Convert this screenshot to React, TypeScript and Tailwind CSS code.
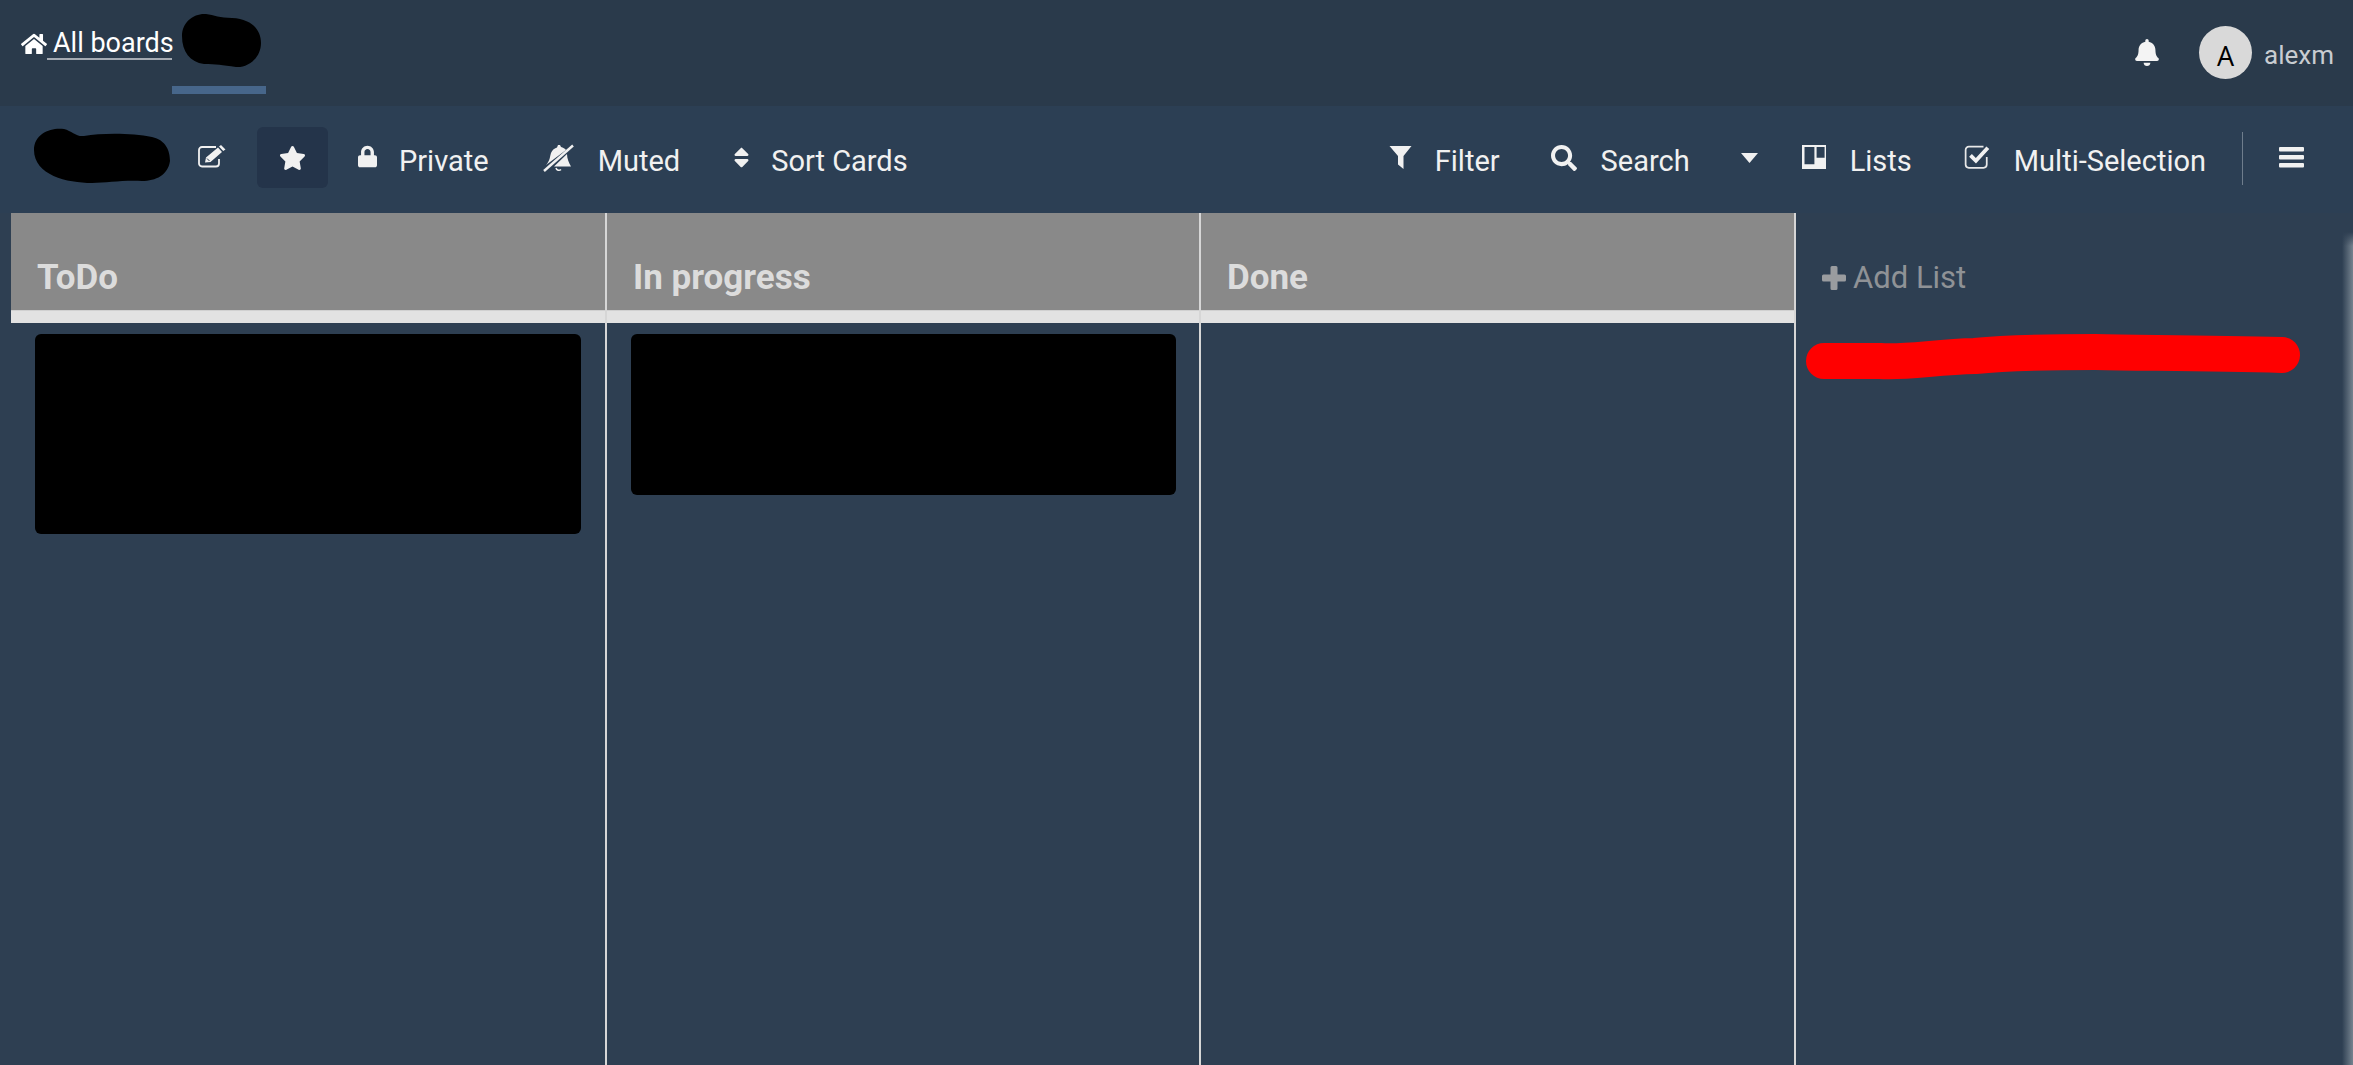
import { FaHome, FaStar, FaLock, FaSort, FaSearch, FaBell } from "react-icons/fa";
import type { ReactNode } from "react";

function Tool({ icon, label, className }: { icon: ReactNode; label: string; className: string }) {
  return (
    <div className={"flex items-center " + className}>
      {icon}
      <span className="text-[29px] leading-none text-[#f1f1f1] mt-[4px]">{label}</span>
    </div>
  );
}

function ListHeader({ title, w }: { title: string; w: string }) {
  return (
    <div className={"flex flex-col border-r-2 border-[#d6d6d6] " + w}>
      <div className="h-[98px] bg-[#898989] flex items-end pl-[26px] pb-[12px] border-b border-[#d0d0d0]">
        <span className="text-[35px] leading-[40px] font-bold text-[#dcdcdc]">{title}</span>
      </div>
      <div className="h-[12px] bg-[#e2e2e2]" />
    </div>
  );
}

const EditIcon = () => (
  <svg width="28" height="23" viewBox="0 0 28 23" className="ml-[26px] mb-[6px] shrink-0">
    <path d="M21 14 V18.5 a3 3 0 0 1 -3 3 H4 a3 3 0 0 1 -3 -3 V5 a3 3 0 0 1 3 -3 H18" fill="none" stroke="#f1f1f1" strokeWidth="1.8" />
    <path d="M7 17.5 L8 12.5 L20 2.5 L24 7 L12.5 17 Z M21 1.5 L23 0 L27.5 4.5 L25.2 6 Z" fill="#f1f1f1" />
    <path d="M9 13.5 L11.5 16" stroke="#2c3f54" strokeWidth="1" />
  </svg>
);

const MutedIcon = () => (
  <svg width="31" height="28" viewBox="0 0 31 28" className="mr-[24px] mb-[4px] shrink-0">
    <path d="M3 21 C 7 17, 7 12, 8 9 C 9 6, 12 4, 14 3.5 L15 1 L17 1 L18 3 C 20 3.5, 22 4.5, 23 6 Z" fill="#f1f1f1" />
    <path d="M24 10 C 24 15, 26 19, 28 22.5 L11 22.5 Z" fill="#f1f1f1" />
    <path d="M13 24 A 3 3 0 0 0 18 25.5" fill="none" stroke="#f1f1f1" strokeWidth="1.5" />
    <path d="M1 27 L30 1.5" stroke="#f1f1f1" strokeWidth="2.4" />
  </svg>
);

const FilterIcon = () => (
  <svg width="23" height="23" viewBox="0 0 23 23" className="mr-[23px] mb-[5px] shrink-0">
    <path d="M0.5 0 H22.5 L14.5 10 V23 L9 18.5 V10 Z" fill="#f1f1f1" />
  </svg>
);

const Caret = () => (
  <svg width="17" height="10" viewBox="0 0 17 10" className="ml-[51px] mb-[4px] shrink-0">
    <path d="M0 0 H17 L8.5 10 Z" fill="#f1f1f1" />
  </svg>
);

const ListsIcon = () => (
  <svg width="24" height="24" viewBox="0 0 24 24" className="mr-[24px] mb-[5px] shrink-0">
    <path fillRule="evenodd" d="M0 0 H24 V24 H0 Z M2.5 2 H12.4 V19.3 H2.5 Z M14.6 2 H22.6 V12.7 H14.6 Z" fill="#f1f1f1" />
  </svg>
);

const CheckIcon = () => (
  <svg width="26" height="26" viewBox="0 0 24 24" className="mr-[24px] mb-[6px] shrink-0">
    <path d="M21 12 V19 a3 3 0 0 1 -3 3 H4.5 a3 3 0 0 1 -3 -3 V5.5 a3 3 0 0 1 3 -3 H18" fill="none" stroke="#e8e8e8" strokeWidth="1.6" />
    <path d="M6 10.5 L11 15.5 L22 3.5" fill="none" stroke="#f1f1f1" strokeWidth="3.6" />
  </svg>
);

const BarsIcon = () => (
  <svg width="25" height="21" viewBox="0 0 25 21" className="ml-[36px] mr-[49px] mb-[4px] shrink-0">
    <rect x="0" y="0" width="25" height="4.6" rx="1" fill="#f1f1f1" />
    <rect x="0" y="8" width="25" height="4.6" rx="1" fill="#f1f1f1" />
    <rect x="0" y="16" width="25" height="4.6" rx="1" fill="#f1f1f1" />
  </svg>
);

const PlusIcon = () => (
  <svg width="24" height="24" viewBox="0 0 24 24" className="mr-[7px] shrink-0">
    <path d="M8.5 1.5 a1.5 1.5 0 0 1 1.5 -1.5 h4 a1.5 1.5 0 0 1 1.5 1.5 V8.5 H22.5 a1.5 1.5 0 0 1 1.5 1.5 v4 a1.5 1.5 0 0 1 -1.5 1.5 H15.5 V22.5 a1.5 1.5 0 0 1 -1.5 1.5 h-4 a1.5 1.5 0 0 1 -1.5 -1.5 V15.5 H1.5 a1.5 1.5 0 0 1 -1.5 -1.5 v-4 a1.5 1.5 0 0 1 1.5 -1.5 H8.5 Z" fill="#9a9c9f" />
  </svg>
);

export default function App() {
  return (
    <div className="w-[2353px] h-[1065px] overflow-hidden bg-[#2e3f52] flex flex-col font-['Roboto',sans-serif]">
      <div className="h-[106px] shrink-0 bg-[#2a3a4b] flex items-start justify-between">
        <div className="flex items-start pl-[21px]">
          <div className="flex items-center mt-[27px] h-[33px] text-white">
            <FaHome className="w-[26px] h-[26px] text-white" />
            <span className="text-[27px] leading-[33px] text-white border-b-2 border-[#a5abb3] h-[33px] pl-[6px] w-[125px] whitespace-nowrap">All boards</span>
          </div>
          <div className="flex flex-col w-[94px]">
            <svg width="94" height="86" viewBox="0 0 94 86">
              <path d="M10 36 C10 22 22 13 34 14 C 42 15 48 18 60 18 C 80 19 89 30 89 43 C 89 58 76 68 64 67 C 50 65 44 64 32 64 C 18 62 10 52 10 36 Z" fill="#000" />
            </svg>
            <div className="h-[8px] bg-[#47668a]" />
          </div>
        </div>
        <div className="flex items-center h-[106px] pb-[1px]">
          <FaBell className="w-[24px] h-[27px] text-[#f4f4f4] mr-[40px]" />
          <div className="w-[53px] h-[53px] rounded-full bg-[#d9d9d9] flex items-center justify-center mr-[12px]">
            <span className="text-[27px] leading-none text-black font-['Open_Sans',sans-serif] mt-[5px]">A</span>
          </div>
          <span className="text-[26px] leading-none text-[#c8ccd1] mr-[19px] mt-[5px]">alexm</span>
        </div>
      </div>

      <div className="h-[107px] shrink-0 bg-[#2c3f54] flex items-center">
        <svg width="140" height="60" viewBox="0 0 140 60" className="ml-[32px] mb-[10px] shrink-0">
          <path d="M2 25 C 2 8, 20 2, 32 4 C 40 6, 44 12, 52 11 C 70 8, 100 8, 120 12 C 134 15, 138 26, 138 36 C 136 50, 124 56, 110 56 C 90 55, 75 58, 60 58 C 35 58, 2 50, 2 25 Z" fill="#000" />
        </svg>
        <EditIcon />
        <div className="w-[71px] h-[61px] rounded-[6px] bg-[#24344a] ml-[31px] mb-[4px] flex items-center justify-center">
          <FaStar className="w-[27px] h-[26px] text-[#f1f1f1]" />
        </div>
        <Tool className="ml-[30px]" label="Private" icon={<FaLock className="w-[19px] h-[23px] text-[#f1f1f1] mr-[22px] mb-[6px]" />} />
        <Tool className="ml-[54px]" label="Muted" icon={<MutedIcon />} />
        <Tool className="ml-[53px]" label="Sort Cards" icon={<FaSort className="w-[17px] h-[25px] text-[#f1f1f1] mr-[21px] mb-[4px]" />} />
        <div className="flex-1" />
        <Tool className="" label="Filter" icon={<FilterIcon />} />
        <Tool className="ml-[51px]" label="Search" icon={<FaSearch className="w-[26px] h-[26px] text-[#f1f1f1] mr-[24px] mb-[4px]" />} />
        <Caret />
        <Tool className="ml-[44px]" label="Lists" icon={<ListsIcon />} />
        <Tool className="ml-[52px]" label="Multi-Selection" icon={<CheckIcon />} />
        <div className="w-[1px] h-[53px] bg-[#6f7d8c] ml-[36px] mb-[2px]" />
        <BarsIcon />
      </div>

      <div className="flex-1 flex pl-[11px] relative">
        <div className="flex flex-col">
          <div className="flex">
            <ListHeader title="ToDo" w="w-[596px]" />
            <ListHeader title="In progress" w="w-[594px]" />
            <ListHeader title="Done" w="w-[595px]" />
          </div>
          <div className="flex flex-1">
            <div className="w-[596px] border-r-2 border-[#d6d6d6] pl-[24px] pt-[11px]">
              <div className="w-[546px] h-[200px] bg-black rounded-[6px]" />
            </div>
            <div className="w-[594px] border-r-2 border-[#d6d6d6] pl-[24px] pt-[11px]">
              <div className="w-[545px] h-[161px] bg-black rounded-[6px]" />
            </div>
            <div className="w-[595px] border-r-2 border-[#d6d6d6]" />
          </div>
        </div>
        <div className="flex-1 flex flex-col">
          <div className="flex items-center pl-[26px] pt-[45px] text-[#8f9296]">
            <PlusIcon />
            <span className="text-[31px] leading-[40px]">Add List</span>
          </div>
          <svg width="500" height="50" viewBox="0 0 500 50" className="ml-[9px] mt-[35px]">
            <path d="M19 28 L 75 28 C 100 30, 130 24, 170 23 C 200 20, 240 19, 290 19 C 340 20, 400 20, 477 22" fill="none" stroke="#ff0000" strokeWidth="36" strokeLinecap="round" strokeLinejoin="round" />
          </svg>
        </div>
        <div className="w-[11px] absolute right-0 top-[19px] bottom-0 bg-linear-to-r from-transparent to-[#75838f]">
          <div className="h-[14px] bg-linear-to-b from-[#2e3f52] to-transparent" />
        </div>
      </div>
    </div>
  );
}
